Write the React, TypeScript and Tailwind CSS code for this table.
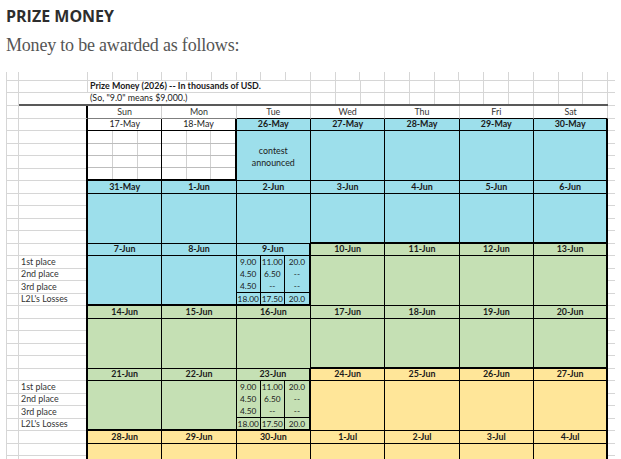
import clsx from 'clsx';

type Color = 'white' | 'blue' | 'green' | 'yellow';
type Block = {
  date: string;
  color: Color;
  thickB?: boolean;
  thickR?: boolean;
  note?: boolean;
  money?: boolean;
};

const bgFor: Record<Color, string> = {
  white: 'bg-white',
  blue: 'bg-[#9ddfeb]',
  green: 'bg-[#c5e0b4]',
  yellow: 'bg-[#ffe699]',
};

const dayNames = ['Sun', 'Mon', 'Tue', 'Wed', 'Thu', 'Fri', 'Sat'];
const labels = ['1st place', '2nd place', '3rd place', "L2L's Losses"];
const money = [
  ['9.00', '11.00', '20.0'],
  ['4.50', '6.50', '--'],
  ['4.50', '--', '--'],
  ['18.00', '17.50', '20.0'],
];

const weeks: { labels?: boolean; days: Block[] }[] = [
  {
    days: [
      { date: '17-May', color: 'white', thickB: true },
      { date: '18-May', color: 'white', thickB: true, thickR: true },
      { date: '26-May', color: 'blue', note: true },
      { date: '27-May', color: 'blue' },
      { date: '28-May', color: 'blue' },
      { date: '29-May', color: 'blue' },
      { date: '30-May', color: 'blue' },
    ],
  },
  {
    days: [
      { date: '31-May', color: 'blue' },
      { date: '1-Jun', color: 'blue' },
      { date: '2-Jun', color: 'blue' },
      { date: '3-Jun', color: 'blue', thickB: true },
      { date: '4-Jun', color: 'blue', thickB: true },
      { date: '5-Jun', color: 'blue', thickB: true },
      { date: '6-Jun', color: 'blue', thickB: true },
    ],
  },
  {
    labels: true,
    days: [
      { date: '7-Jun', color: 'blue', thickB: true },
      { date: '8-Jun', color: 'blue', thickB: true },
      { date: '9-Jun', color: 'blue', thickB: true, thickR: true, money: true },
      { date: '10-Jun', color: 'green' },
      { date: '11-Jun', color: 'green' },
      { date: '12-Jun', color: 'green' },
      { date: '13-Jun', color: 'green' },
    ],
  },
  {
    days: [
      { date: '14-Jun', color: 'green' },
      { date: '15-Jun', color: 'green' },
      { date: '16-Jun', color: 'green' },
      { date: '17-Jun', color: 'green', thickB: true },
      { date: '18-Jun', color: 'green', thickB: true },
      { date: '19-Jun', color: 'green', thickB: true },
      { date: '20-Jun', color: 'green', thickB: true },
    ],
  },
  {
    labels: true,
    days: [
      { date: '21-Jun', color: 'green', thickB: true },
      { date: '22-Jun', color: 'green', thickB: true },
      { date: '23-Jun', color: 'green', thickB: true, thickR: true, money: true },
      { date: '24-Jun', color: 'yellow' },
      { date: '25-Jun', color: 'yellow' },
      { date: '26-Jun', color: 'yellow' },
      { date: '27-Jun', color: 'yellow' },
    ],
  },
  {
    days: [
      { date: '28-Jun', color: 'yellow' },
      { date: '29-Jun', color: 'yellow' },
      { date: '30-Jun', color: 'yellow' },
      { date: '1-Jul', color: 'yellow' },
      { date: '2-Jul', color: 'yellow' },
      { date: '3-Jul', color: 'yellow' },
      { date: '4-Jul', color: 'yellow' },
    ],
  },
];

function SubCells({ count }: { count: number }) {
  return (
    <>
      {Array.from({ length: count }).map((_, i) => (
        <div key={i} className="w-[24.78px] shrink-0 border-r border-b border-[#d6d6d6]" />
      ))}
    </>
  );
}

function DayBlock({ b, last }: { b: Block; last: boolean }) {
  const white = b.color === 'white';
  return (
    <div
      className={clsx(
        'w-[74.33px] h-[62.5px] shrink-0 flex flex-col border-black',
        bgFor[b.color],
        b.thickB ? 'border-b-2' : 'border-b',
        b.thickR || last ? 'border-r-2' : 'border-r'
      )}
    >
      <div
        className={clsx(
          'h-[12.5px] shrink-0 border-b border-black flex items-center justify-center',
          !white && 'font-bold'
        )}
      >
        {b.date}
      </div>
      {white && (
        <div className="flex-1 flex flex-col">
          {[0, 1, 2, 3].map((r) => (
            <div key={r} className={clsx('flex-1 flex', r < 3 && 'border-b border-b-[#bdbdbd]')}>
              <div className="flex-1 border-r border-r-[#d0d0d0]" />
              <div className="flex-1 border-r border-r-[#d0d0d0]" />
              <div className="flex-1" />
            </div>
          ))}
        </div>
      )}
      {b.note && (
        <div className="flex-1 grid grid-rows-4">
          <div />
          <div className="flex items-end justify-center">contest</div>
          <div className="flex items-end justify-center">announced</div>
          <div />
        </div>
      )}
      {b.money && (
        <div className="flex-1 grid grid-cols-3 grid-rows-4 text-[8.3px]">
          {money.flat().map((v, i) => (
            <div
              key={i}
              className={clsx(
                'flex items-center justify-center border-black',
                i % 3 < 2 && 'border-r',
                i >= 9 && 'border-t'
              )}
            >
              {v}
            </div>
          ))}
        </div>
      )}
    </div>
  );
}

function Week({ week }: { week: (typeof weeks)[number] }) {
  return (
    <div className="flex h-[62.5px]">
      <div className="w-[13px] shrink-0 flex flex-col">
        {Array.from({ length: 5 }).map((_, i) => (
          <div key={i} className="h-[12.5px] border-l border-r border-b border-[#d6d6d6]" />
        ))}
      </div>
      <div className="w-[69px] shrink-0 flex flex-col border-r-2 border-black">
        {Array.from({ length: 5 }).map((_, i) => (
          <div key={i} className="h-[12.5px] border-b border-[#d6d6d6] flex items-center pl-[2px] text-[#333]">
            {week.labels && i > 0 ? labels[i - 1] : ''}
          </div>
        ))}
      </div>
      {week.days.map((b, i) => (
        <DayBlock key={b.date} b={b} last={i === 6} />
      ))}
      <div className="flex-1 flex flex-col">
        {Array.from({ length: 5 }).map((_, i) => (
          <div key={i} className="h-[12.5px] border-b border-[#d6d6d6]" />
        ))}
      </div>
    </div>
  );
}

export default function App() {
  return (
    <div className="h-[459px] overflow-hidden bg-white px-[6px]">
      <h1 className="pt-1 h-[28px] leading-[24px] text-[16px] font-bold text-[#2d2d2d] font-['Open_Sans',sans-serif]">
        PRIZE MONEY
      </h1>
      <p className="mt-[5px] leading-[24px] text-[18px] tracking-[-0.2px] text-[#555] font-['Liberation_Serif',serif]">
        Money to be awarded as follows:
      </p>

      <div className="mt-[15px] text-[8.9px] leading-none text-[#1a1a1a] font-['Lato',sans-serif]">
        {/* top rows of the sheet */}
        <div className="flex h-[8.5px]">
          <div className="w-[13px] shrink-0 border-l border-r border-b border-[#d6d6d6]" />
          <div className="w-[69px] shrink-0 border-r border-b border-[#d6d6d6]" />
          <SubCells count={21} />
          <div className="flex-1 border-b border-[#d6d6d6]" />
        </div>
        <div className="flex h-[12.3px]">
          <div className="w-[13px] shrink-0 border-l border-r border-b border-[#d6d6d6]" />
          <div className="w-[69px] shrink-0 border-r border-b border-[#d6d6d6]" />
          <div className="w-[223px] shrink-0 border-r border-b border-[#d6d6d6] flex items-center pl-[2px] font-bold whitespace-nowrap">
            Prize Money (2026) -- In thousands of USD.
          </div>
          <SubCells count={12} />
          <div className="flex-1 border-b border-[#d6d6d6]" />
        </div>
        <div className="flex h-[13.7px]">
          <div className="w-[13px] shrink-0 border-l border-r border-b border-[#d6d6d6]" />
          <div className="flex border-b-2 border-[#595959]">
            <div className="w-[69px] shrink-0" />
            <div className="w-[223px] shrink-0 border-r border-[#d6d6d6] flex items-center pl-[2px] whitespace-nowrap">
              (So, "9.0" means $9,000.)
            </div>
            {Array.from({ length: 12 }).map((_, i) => (
              <div key={i} className="w-[24.78px] shrink-0 border-r border-[#d6d6d6]" />
            ))}
          </div>
          <div className="flex-1 border-b border-[#d6d6d6]" />
        </div>

        {/* day names */}
        <div className="flex h-[12.5px]">
          <div className="w-[13px] shrink-0 border-l border-r border-b border-[#d6d6d6]" />
          <div className="w-[69px] shrink-0 border-b border-b-[#d6d6d6] border-r-2 border-r-black" />
          {dayNames.map((d, i) => (
            <div
              key={d}
              className={clsx(
                'w-[74.33px] shrink-0 border-r border-r-[#cfcfcf] border-b flex items-center justify-center text-[#333]',
                i < 2 ? 'border-b-[#7f7f7f]' : 'border-b-black'
              )}
            >
              {d}
            </div>
          ))}
          <div className="flex-1 border-b border-[#d6d6d6]" />
        </div>

        {weeks.map((w, i) => (
          <Week key={i} week={w} />
        ))}
      </div>
    </div>
  );
}
